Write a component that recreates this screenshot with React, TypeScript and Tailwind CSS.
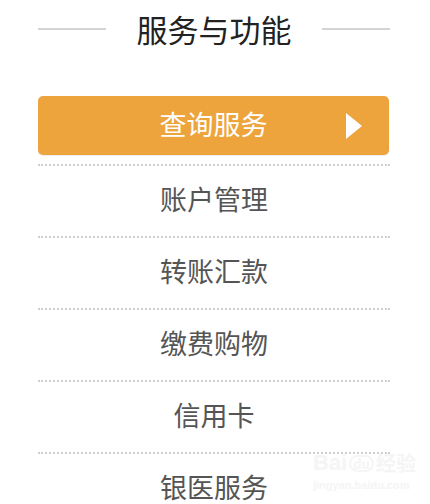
import React from "react";

const items = ["账户管理", "转账汇款", "缴费购物", "信用卡", "银医服务"];

export default function App() {
  return (
    <div
      className="relative w-[430px] h-[504px] overflow-hidden bg-white"
      style={{ fontFamily: '"Noto Sans CJK SC", "Noto Sans", sans-serif' }}
    >
      <div className="ml-[38px] w-[352px]">
        <div className="flex h-[58px] items-center justify-between">
          <div className="h-[2px] w-[68px] bg-[#d4d4d4]" />
          <div className="relative -top-[1px] text-[31px] leading-none text-[#222]">服务与功能</div>
          <div className="h-[2px] w-[68px] bg-[#d4d4d4]" />
        </div>
        <div className="mt-[38px] relative flex h-[59px] w-[351px] items-center justify-center rounded-[5px] bg-[#eea43d] shadow-[0_1px_1px_rgba(0,0,0,0.08)]">
          <span className="relative -top-[2px] text-[27px] leading-none text-white">查询服务</span>
          <svg
            className="absolute right-[26px] top-[17px]"
            width="17"
            height="26"
            viewBox="0 0 17 26"
          >
            <polygon points="0,0 16,13 0,26" fill="#ffffff" />
          </svg>
        </div>
        <div className="mt-[9px]">
          {items.map((t) => (
            <div
              key={t}
              className="flex h-[72px] items-center justify-center border-t-2 border-dotted border-[#cfcfcf]"
            >
              <span className="relative -top-[3px] text-[27px] leading-none text-[#555]">{t}</span>
            </div>
          ))}
        </div>
      </div>
      <div className="pointer-events-none absolute left-[313px] top-[452px] flex flex-col items-start opacity-50">
        <div className="flex items-center gap-[2px]">
          <span
            className="text-[22px] font-bold leading-none text-[#ececec]"
            style={{ fontFamily: '"Liberation Sans", sans-serif' }}
          >
            Bai
          </span>
          <span className="rounded-full border-2 border-[#ececec] px-[2px] text-[13px] font-bold leading-none text-[#ececec]">
            du
          </span>
          <span className="text-[20px] font-bold leading-none text-[#ececec]">经验</span>
        </div>
        <span
          className="mt-[6px] text-[11px] font-bold leading-none text-[#ececec]"
          style={{ fontFamily: '"Liberation Sans", sans-serif' }}
        >
          jingyan.baidu.com
        </span>
      </div>
    </div>
  );
}
